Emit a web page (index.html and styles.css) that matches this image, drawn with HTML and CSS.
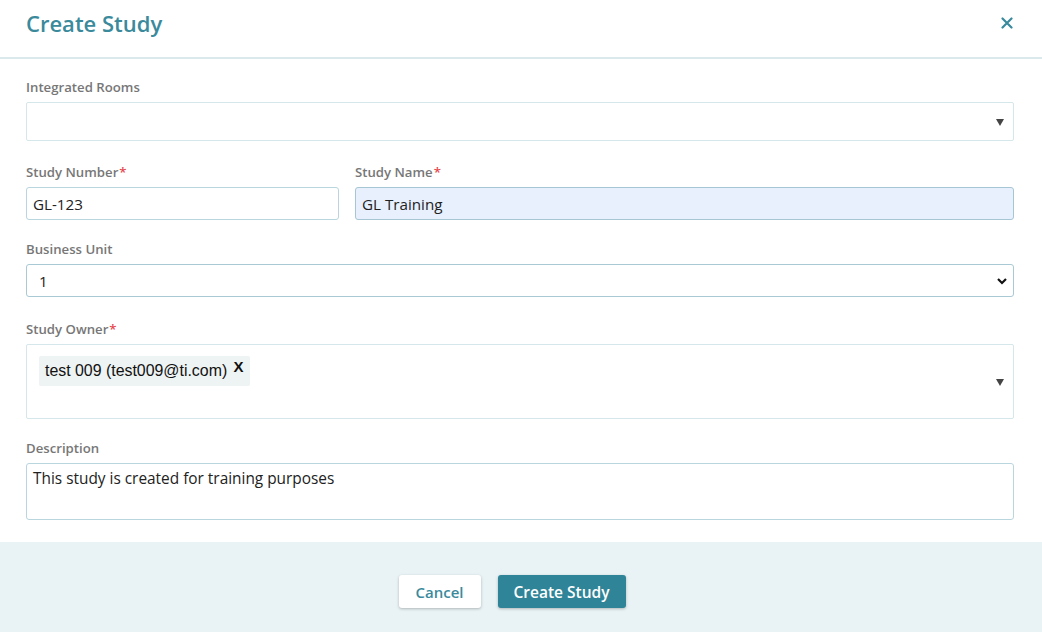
FILE: index.html
```html
<!DOCTYPE html>
<html lang="en">
<head>
    <meta charset="UTF-8">
    <meta name="viewport" content="width=device-width, initial-scale=1.0">
    <title>Create Study</title>
    <link rel="stylesheet" href="styles.css">
</head>
<body>
    <div class="modal">
        <div class="modalHeader">
            <h1 class="modalTitle">Create Study</h1>
            <button class="closeButton" aria-label="Close">
                <svg width="12" height="12" viewBox="0 0 12 12">
                    <path d="M1.5 1.5 L10.5 10.5 M10.5 1.5 L1.5 10.5" stroke="#3a8a9c" stroke-width="2.2" stroke-linecap="round"/>
                </svg>
            </button>
        </div>
        <div class="modalBody">
            <div class="field">
                <label class="fieldLabel">Integrated Rooms</label>
                <div class="pickBox roomsBox">
                    <span class="caret"></span>
                </div>
            </div>
            <div class="row field tight">
                <div class="col small">
                    <label class="fieldLabel">Study Number<span class="req">*</span></label>
                    <input class="textInput" type="text" value="GL-123">
                </div>
                <div class="col big">
                    <label class="fieldLabel">Study Name<span class="req">*</span></label>
                    <input class="textInput filled" type="text" value="GL Training">
                </div>
            </div>
            <div class="field wide">
                <label class="fieldLabel">Business Unit</label>
                <div class="selectBox">
                    <span>1</span>
                    <svg width="12" height="8" viewBox="0 0 12 8">
                        <path d="M2 2 L6 6 L10 2" fill="none" stroke="#111" stroke-width="2.2"/>
                    </svg>
                </div>
            </div>
            <div class="field tight">
                <label class="fieldLabel">Study Owner<span class="req">*</span></label>
                <div class="pickBox ownerBox">
                    <div class="chips">
                        <span class="chip">test 009 (test009@ti.com) <b class="chipX">X</b></span>
                    </div>
                    <span class="caret"></span>
                </div>
            </div>
            <div class="field last">
                <label class="fieldLabel">Description</label>
                <textarea class="textArea">This study is created for training purposes</textarea>
            </div>
        </div>
        <div class="modalFooter">
            <button class="btn btnCancel">Cancel</button>
            <button class="btn btnPrimary">Create Study</button>
        </div>
    </div>
</body>
</html>
```

FILE: styles.css
```css
html,body{
    margin: 0px;
    padding: 0px;
    height: 100%;
    background-color: #ffffff;
    font-family: "Open Sans", "Liberation Sans", sans-serif;
}
.modal{
    width: 1042px;
    height: 632px;
    display: flex;
    flex-direction: column;
    overflow: hidden;
}
.modalHeader{
    height: 57px;
    border-bottom: 2px solid #dbe9ed;
    display: flex;
    align-items: center;
    justify-content: space-between;
    padding: 0px 26px;
}
.modalTitle{
    margin: 0px;
    margin-top: -12px;
    font-size: 22px;
    font-weight: 600;
    color: #3a8a9c;
}
.closeButton{
    border: none;
    background: none;
    padding: 0px;
    margin-right: 3px;
    margin-top: -11px;
    display: flex;
}
.modalBody{
    padding: 20px 28px 22px 26px;
    display: flex;
    flex-direction: column;
}
.field{
    display: flex;
    flex-direction: column;
    margin-bottom: 23px;
}
.field.tight{
    margin-bottom: 21px;
}
.field.wide{
    margin-bottom: 24px;
}
.field.last{
    margin-bottom: 0px;
}
.row{
    flex-direction: row;
    gap: 16px;
}
.col{
    display: flex;
    flex-direction: column;
}
.col.small{
    width: 313px;
}
.col.big{
    flex: 1;
}
.fieldLabel{
    font-size: 13.2px;
    font-weight: 600;
    color: #777777;
    line-height: 17px;
    margin-bottom: 6px;
}
.req{
    color: #e5484d;
    margin-left: 1px;
}
.pickBox{
    box-sizing: border-box;
    border: 1px solid #d6e7eb;
    border-radius: 2px;
    display: flex;
    align-items: center;
    position: relative;
}
.roomsBox{
    height: 39px;
}
.ownerBox{
    height: 75px;
    align-items: flex-start;
}
.caret{
    position: absolute;
    right: 9px;
    top: 50%;
    margin-top: -3px;
    width: 0px;
    height: 0px;
    border-left: 4.5px solid transparent;
    border-right: 4.5px solid transparent;
    border-top: 7px solid #444444;
}
.chips{
    padding: 11px 12px;
    display: flex;
}
.chip{
    background-color: #eef3f3;
    border-radius: 2px;
    padding: 0px 6px;
    height: 30px;
    line-height: 30px;
    font-family: "Liberation Sans", Arial, sans-serif;
    font-size: 15.9px;
    color: #111111;
}
.chipX{
    font-size: 15px;
    font-weight: bold;
    position: relative;
    top: -4px;
    margin-left: 2px;
}
.textInput{
    box-sizing: border-box;
    height: 33px;
    border: 1px solid #b9d5de;
    border-radius: 3px;
    padding: 0px 6px;
    font-family: "Open Sans", "Liberation Sans", sans-serif;
    font-size: 15.2px;
    color: #222222;
    outline: none;
}
.textInput.filled{
    background-color: #e8f0fe;
    border-color: #a6c6d3;
}
.selectBox{
    box-sizing: border-box;
    height: 33px;
    border: 1px solid #a9c9d4;
    border-radius: 3px;
    padding: 0px 5px 0px 12px;
    display: flex;
    align-items: center;
    justify-content: space-between;
    font-size: 15px;
    color: #222222;
}
.textArea{
    box-sizing: border-box;
    height: 57px;
    border: 1px solid #b9d5de;
    border-radius: 3px;
    padding: 4px 6px;
    font-family: "Open Sans", "Liberation Sans", sans-serif;
    font-size: 15.4px;
    line-height: 22px;
    color: #222222;
    resize: none;
    outline: none;
}
.modalFooter{
    flex: 1;
    background-color: #e9f2f5;
    display: flex;
    align-items: center;
    justify-content: center;
    gap: 17px;
    padding-top: 9px;
    padding-right: 18px;
}
.btn{
    height: 33px;
    border: none;
    border-radius: 3px;
    font-family: "Open Sans", "Liberation Sans", sans-serif;
    font-size: 15px;
    font-weight: 600;
    padding: 0px;
    box-shadow: 0px 1px 3px rgba(0,0,0,0.25);
}
.btnCancel{
    width: 82px;
    background-color: #ffffff;
    color: #3a8a9c;
}
.btnPrimary{
    width: 128px;
    background-color: #2f8497;
    color: #ffffff;
    font-size: 15.5px;
}
```
